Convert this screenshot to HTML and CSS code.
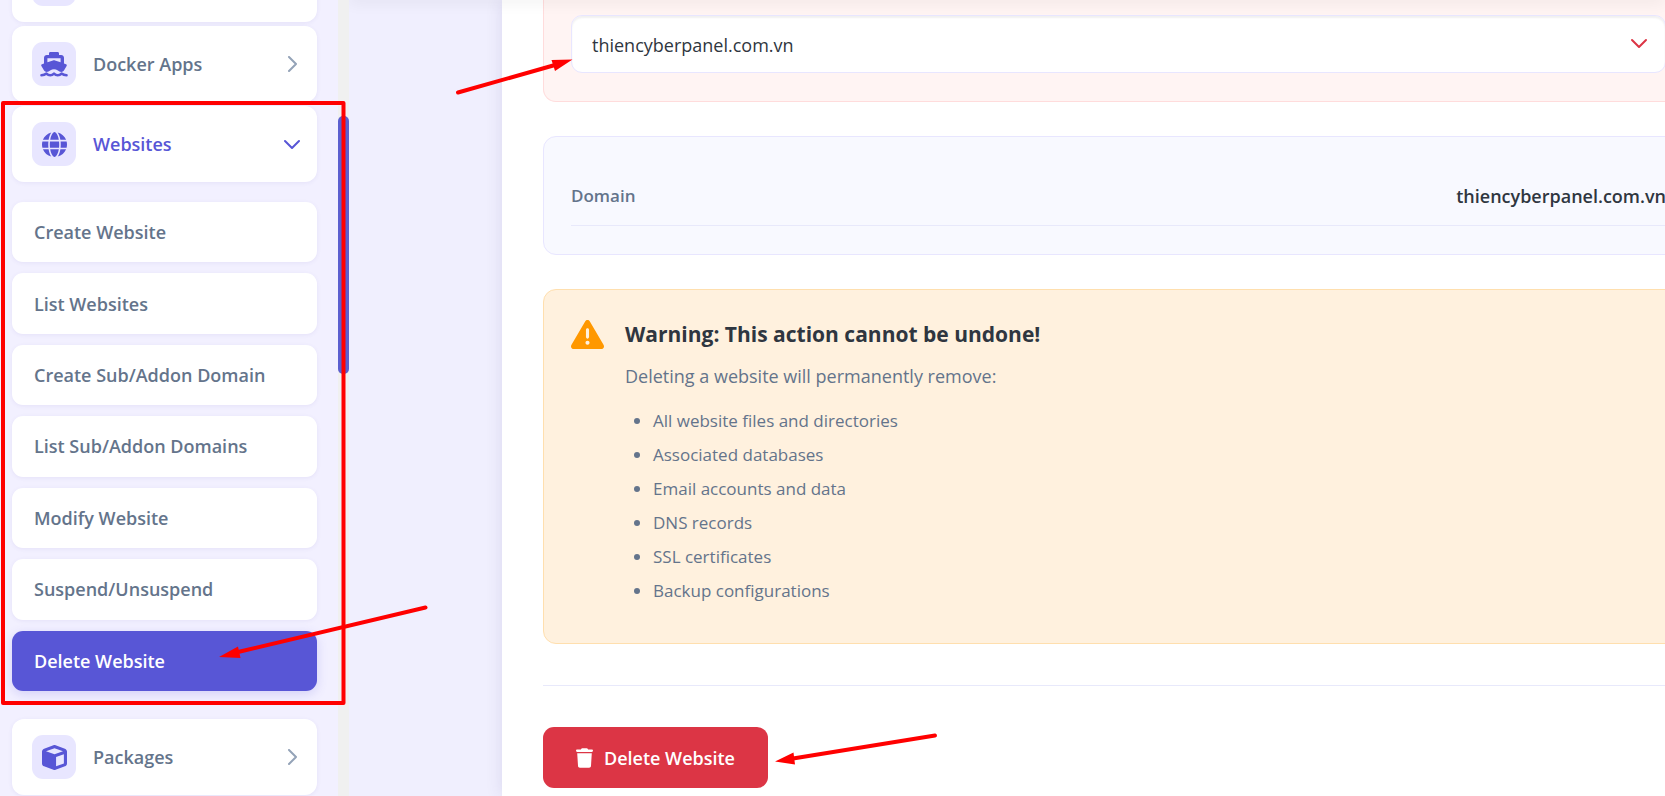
FILE: index.html
```html
<!DOCTYPE html>
<html lang="en">
<head>
<meta charset="utf-8">
<title>Delete Website</title>
<link rel="stylesheet" href="styles.css">
</head>
<body>
<div class="app">
  <nav class="sidebar">
    <div class="nav-item"><span class="tile"></span></div>
    <a class="nav-item" href="#docker">
      <span class="tile"><svg class="ship" viewBox="0 0 28 25"><path fill-rule="evenodd" d="M9 1.400C9 .6 9.600 0 10.400 0h7.200c.8 0 1.400.6 1.400 1.400V3h2.200C22.700 3 24 4.200 24 5.800v5.700l2 .7c.8.300 1 1 .6 1.700l-2.500 4.300c-.7 1.200-1.700 1.700-2.900 1.700-1.200 0-2.300-.6-3.300-1.300a6.500 6.500 0 0 0-7.800 0c-1 .7-2.100 1.300-3.300 1.300-1.200 0-2.200-.5-2.900-1.700L1.400 13.900c-.4-.7-.2-1.400.6-1.700l2-.7V5.800C4 4.200 5.300 3 6.800 3H9zM7.400 6.300v4L13 8.400c.7-.2 1.300-.2 2 0l5.600 1.900v-4z"/><path fill="none" stroke="currentColor" stroke-width="2.600" stroke-linecap="round" stroke-linejoin="round" d="M1.500 23.300c2 0 3.600-.6 5-1.700 2.200 2.200 5.300 2.200 7.500 0 2.200 2.200 5.300 2.200 7.500 0 1.400 1.100 3 1.700 5 1.700"/></svg></span>
      <span class="label">Docker Apps</span>
      <svg class="chev" viewBox="0 0 16 16"><path d="M5 1l7 7-7 7"/></svg>
    </a>
    <a class="nav-item open" href="#websites">
      <span class="tile"><svg class="glyph" viewBox="0 0 512 512"><path d="M352 256c0 22.200-1.200 43.600-3.300 64H163.300c-2.200-20.400-3.300-41.800-3.300-64s1.200-43.600 3.300-64H348.700c2.200 20.400 3.300 41.800 3.300 64zm28.800-64H503.900c5.300 20.500 8.100 41.900 8.100 64s-2.800 43.500-8.100 64H380.800c2.100-20.600 3.200-42 3.200-64s-1.100-43.400-3.200-64zm112.600-32H376.700c-10-63.900-29.800-117.400-55.300-151.600c78.300 20.700 142 77.500 171.900 151.600zm-149.100 0H167.700c6.100-36.400 15.500-68.600 27-94.700c10.500-23.600 22.200-40.700 33.500-51.500C239.400 3.200 248.700 0 256 0s16.600 3.200 27.800 13.800c11.300 10.800 23 27.900 33.500 51.500c11.600 26 20.900 58.200 27 94.700zm-209 0H18.600C48.600 85.900 112.200 29.100 190.600 8.400C165.100 42.600 145.300 96.100 135.300 160zM8.100 192H131.200c-2.100 20.600-3.200 42-3.200 64s1.100 43.400 3.200 64H8.100C2.800 299.500 0 278.100 0 256s2.800-43.500 8.100-64zM194.700 446.600c-11.600-26-20.900-58.200-27-94.600H344.300c-6.100 36.400-15.500 68.600-27 94.600c-10.500 23.600-22.200 40.700-33.500 51.500C272.600 508.800 263.300 512 256 512s-16.600-3.200-27.800-13.800c-11.300-10.800-23-27.900-33.500-51.500zM135.300 352c10 63.900 29.800 117.400 55.300 151.600C112.200 482.900 48.600 426.100 18.600 352H135.300zm358.100 0c-30 74.100-93.600 130.900-171.900 151.600c25.500-34.200 45.200-87.700 55.300-151.600H493.400z"/></svg></span>
      <span class="label">Websites</span>
      <svg class="chev" viewBox="0 0 16 16"><path d="M1 5l7 7 7-7"/></svg>
    </a>
    <div class="submenu">
      <a href="#create">Create Website</a>
      <a href="#list">List Websites</a>
      <a href="#create-sub">Create Sub/Addon Domain</a>
      <a href="#list-sub">List Sub/Addon Domains</a>
      <a href="#modify">Modify Website</a>
      <a href="#suspend">Suspend/Unsuspend</a>
      <a class="active" href="#delete">Delete Website</a>
    </div>
    <a class="nav-item" href="#packages">
      <span class="tile"><svg class="glyph" viewBox="0 0 512 512"><path d="M234.500 5.700c13.900-5 29.100-5 43.100 0l192 68.600C495 83.400 512 107.500 512 134.600V377.400c0 27-17 51.200-42.500 60.300l-192 68.600c-13.900 5-29.100 5-43.100 0l-192-68.600C17 428.600 0 404.500 0 377.400V134.600c0-27 17-51.200 42.500-60.300l192-68.600zM256 66L82.300 128 256 190l173.700-62L256 66zm32 368.600l160-57.100v-188L288 246.600v188z"/></svg></span>
      <span class="label">Packages</span>
      <svg class="chev" viewBox="0 0 16 16"><path d="M5 1l7 7-7 7"/></svg>
    </a>
  </nav>
  <div class="scroll-track"><div class="scroll-thumb"></div></div>
  <main class="main">
    <div class="card">
      <section class="picker">
        <div class="select-wrap">
          <select class="select" aria-label="thiencyberpanel.com.vn"><option>thiencyberpanel.com.vn</option></select>
          <svg class="select-chev" viewBox="0 0 18 12"><path d="M2 2l7 7 7-7"/></svg>
        </div>
      </section>
      <section class="info">
        <div class="info-row"><span class="info-name">Domain</span><span class="info-value">thiencyberpanel.com.vn</span></div>
      </section>
      <section class="warning">
        <svg class="warning-icon" viewBox="0 0 512 512"><path d="M256 32c14.200 0 27.300 7.500 34.500 19.800l216 368c7.300 12.400 7.300 27.700 .2 40.100S486.300 480 472 480H40c-14.300 0-27.600-7.700-34.700-20.100s-7-27.800 .2-40.100l216-368C228.700 39.500 241.800 32 256 32zm0 128c-13.300 0-24 10.700-24 24V296c0 13.300 10.700 24 24 24s24-10.700 24-24V184c0-13.300-10.700-24-24-24zm32 224a32 32 0 1 0 -64 0 32 32 0 1 0 64 0z"/></svg>
        <div class="warning-body">
          <h2>Warning: This action cannot be undone!</h2>
          <p>Deleting a website will permanently remove:</p>
          <ul>
            <li>All website files and directories</li>
            <li>Associated databases</li>
            <li>Email accounts and data</li>
            <li>DNS records</li>
            <li>SSL certificates</li>
            <li>Backup configurations</li>
          </ul>
        </div>
      </section>
      <div class="actions">
        <button class="delete" type="button"><svg viewBox="0 0 448 512"><path d="M135.200 17.700L128 32H32C14.300 32 0 46.300 0 64S14.300 96 32 96H416c17.700 0 32-14.300 32-32s-14.300-32-32-32H320l-7.200-14.300C307.400 6.800 296.300 0 284.200 0H163.800c-12.100 0-23.200 6.800-28.600 17.700zM416 128H32L53.200 467c1.600 25.300 22.600 45 47.900 45H346.900c25.300 0 46.300-19.700 47.900-45L416 128z"/></svg>Delete Website</button>
      </div>
    </div>
  </main>
</div>
<svg class="marks" width="960" height="796" viewBox="0 0 960 796">
  <g fill="none" stroke="#f00" stroke-width="4" stroke-linecap="round" stroke-linejoin="round">
    <path d="M3 103H343.500V703H3z"/>
    <path d="M458 92.500L555 65"/><path d="M425.500 607.500L238 652"/><path d="M935 735.500L793 758.500"/>
  </g>
  <path fill="#f00" d="M572.500 59.500L551.500 60L555 71zM219 657L238 646.500L240.500 658zM775 761.500L793.500 752.500L795 764.500z"/>
</svg>
</body>
</html>
```
FILE: styles.css
```css
* { box-sizing: border-box; }
body {
  margin: 0;
  height: 100vh;
  overflow: hidden;
  background: #f0effe;
  color: #2f3640;
  font: 18px/28px "Open Sans", "Noto Sans", sans-serif;
}
.app { display: flex; height: 100%; overflow: hidden; }

.sidebar {
  flex: none;
  width: 338px;
  padding: 0 21px 0 12px;
  background: #f2f0ff;
}
.nav-item {
  display: flex;
  align-items: center;
  height: 76px;
  margin-bottom: 4px;
  padding: 0 20px;
  border-radius: 12px;
  background: #fff;
  box-shadow: 0 1px 4px rgba(80, 70, 160, 0.08);
  color: #64748b;
  font-weight: 600;
  text-decoration: none;
}
.nav-item:first-child { margin-top: -54px; }
.tile {
  display: flex;
  align-items: center;
  justify-content: center;
  width: 44px;
  height: 44px;
  margin-right: 17px;
  border-radius: 11px;
  background: #e8e6ff;
  color: #5856d6;
}
.tile svg { fill: currentColor; }
.ship { width: 28px; height: 25px; }
.glyph { width: 25px; height: 25px; }
.label { flex: 1; }
.chev {
  width: 16px;
  height: 16px;
  margin-right: -3px;
  fill: none;
  stroke: #94a3b8;
  stroke-width: 2;
  stroke-linecap: round;
  stroke-linejoin: round;
}
.open { color: #5856d6; }
.open .chev { stroke: #5856d6; }

.submenu {
  display: grid;
  grid-auto-rows: 1fr;
  gap: 11px;
  height: 489px;
  margin: 20px 0 28px;
}
.submenu a {
  display: flex;
  align-items: center;
  padding: 0 22px;
  border-radius: 11px;
  background: #fff;
  box-shadow: 0 1px 4px rgba(80, 70, 160, 0.08);
  color: #64748b;
  font-weight: 600;
  text-decoration: none;
}
.submenu .active {
  background: #5856d6;
  box-shadow: 0 3px 11px rgba(88, 86, 214, 0.2);
  color: #fff;
}
.scroll-track { flex: none; width: 11px; padding-top: 116px; background: #f0f0f0; }
.scroll-thumb { height: 258px; border-radius: 5px; background: #5b5fcf; }

.main {
  position: relative;
  flex: 1;
  min-width: 0;
  padding-left: 153px;
  overflow: hidden;
}
.main::before {
  content: "";
  position: absolute;
  z-index: 2;
  top: -10px;
  left: 0;
  right: 0;
  height: 10px;
  box-shadow: 0 2px 16px rgba(0, 0, 0, 0.07);
}
.card {
  min-height: 100%;
  margin-right: -70px;
  padding: 0 41px;
  background: #fff;
  box-shadow: 0 0 16px rgba(60, 50, 120, 0.12);
}
.picker {
  padding: 15px 27px 28px;
  border: 1px solid #ffdcdc;
  border-top: 0;
  border-radius: 0 0 13px 13px;
  background: #fff4f3;
}
.select-wrap { position: relative; }
.select {
  display: block;
  width: 100%;
  height: 58px;
  padding: 2px 20px 0;
  border: 1px solid #e8e6ff;
  border-radius: 11px;
  background: #fff;
  box-shadow: inset 0 2px 2px rgba(0, 0, 0, 0.06);
  color: #2f3640;
  font: inherit;
  appearance: none;
}
.select-chev {
  position: absolute;
  top: 23px;
  right: 18px;
  width: 18px;
  height: 12px;
  fill: none;
  stroke: #dc3545;
  stroke-width: 2;
  stroke-linecap: round;
  stroke-linejoin: round;
}
.info {
  margin-top: 34px;
  padding: 28px 27px;
  border: 1px solid #e8e6ff;
  border-radius: 13px;
  background: #f8f9ff;
}
.info-row {
  display: flex;
  justify-content: space-between;
  padding: 17px 0 15px;
  border-bottom: 1px solid #e8e9fb;
}
.info-name { color: #64748b; font-size: 17px; font-weight: 600; }
.info-value { font-weight: 600; }
.warning {
  display: flex;
  align-items: flex-start;
  gap: 21px;
  margin-top: 34px;
  padding: 28px 27px 35px;
  border: 1px solid #ffdfae;
  border-radius: 13px;
  background: #fff1de;
}
.warning-icon { width: 33px; height: 33px; fill: #ff9800; }
.warning h2 { margin: 0 0 10px; font-size: 21px; line-height: 32px; font-weight: 700; }
.warning p { margin: 0 0 12px; line-height: 32px; color: #64748b; }
.warning ul { margin: 0; padding-left: 28px; color: #64748b; font-size: 17px; line-height: 34px; }
.actions {
  margin-top: 41px;
  padding-top: 41px;
  border-top: 1px solid #e8e9fb;
}
.delete {
  display: flex;
  align-items: center;
  gap: 11px;
  height: 61px;
  padding: 0 33px;
  border: 0;
  border-radius: 11px;
  background: #dc3545;
  color: #fff;
  font: inherit;
  font-weight: 600;
}
.delete svg { width: 17px; height: 20px; fill: currentColor; }
.marks { position: absolute; top: 0; left: 0; pointer-events: none; }
```
